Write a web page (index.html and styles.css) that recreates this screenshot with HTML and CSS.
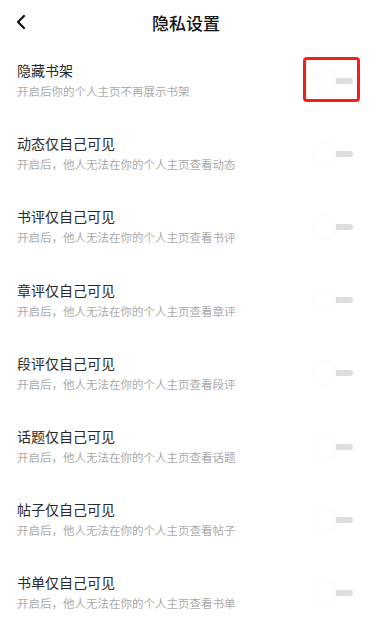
FILE: index.html
```html
<!DOCTYPE html>
<html lang="zh">
<head>
<meta charset="utf-8">
<link rel="stylesheet" href="styles.css">
</head>
<body>
<div class="page">
  <header class="header">
    <span class="back">
      <svg width="12" height="16" viewBox="0 0 12 16"><path d="M9 2 L3 8 L9 14" fill="none" stroke="#111" stroke-width="2.2" stroke-linecap="round" stroke-linejoin="round"/></svg>
    </span>
    <h1 class="title">隐私设置</h1>
    <span></span>
  </header>
  <ul class="list">
    <li class="row">
      <div class="text"><div class="name">隐藏书架</div><div class="desc">开启后你的个人主页不再展示书架</div></div>
      <div class="switch"><span class="knob"></span><span class="mark"></span></div>
    </li>
    <li class="row">
      <div class="text"><div class="name">动态仅自己可见</div><div class="desc">开启后，他人无法在你的个人主页查看动态</div></div>
      <div class="switch"><span class="knob"></span></div>
    </li>
    <li class="row">
      <div class="text"><div class="name">书评仅自己可见</div><div class="desc">开启后，他人无法在你的个人主页查看书评</div></div>
      <div class="switch"><span class="knob"></span></div>
    </li>
    <li class="row">
      <div class="text"><div class="name">章评仅自己可见</div><div class="desc">开启后，他人无法在你的个人主页查看章评</div></div>
      <div class="switch"><span class="knob"></span></div>
    </li>
    <li class="row">
      <div class="text"><div class="name">段评仅自己可见</div><div class="desc">开启后，他人无法在你的个人主页查看段评</div></div>
      <div class="switch"><span class="knob"></span></div>
    </li>
    <li class="row">
      <div class="text"><div class="name">话题仅自己可见</div><div class="desc">开启后，他人无法在你的个人主页查看话题</div></div>
      <div class="switch"><span class="knob"></span></div>
    </li>
    <li class="row">
      <div class="text"><div class="name">帖子仅自己可见</div><div class="desc">开启后，他人无法在你的个人主页查看帖子</div></div>
      <div class="switch"><span class="knob"></span></div>
    </li>
    <li class="row">
      <div class="text"><div class="name">书单仅自己可见</div><div class="desc">开启后，他人无法在你的个人主页查看书单</div></div>
      <div class="switch"><span class="knob"></span></div>
    </li>
  </ul>
</div>
</body>
</html>
```
FILE: styles.css
```css
* { box-sizing: border-box; }
html, body { margin: 0; padding: 0; background: #fff; }
body {
  font-family: "Noto Sans CJK SC", "Noto Sans", sans-serif;
  width: 372px;
  height: 625px;
  overflow: hidden;
}
.page { width: 372px; }
.header {
  height: 43px;
  display: grid;
  grid-template-columns: 60px 1fr 60px;
  align-items: center;
  padding-top: 2px;
}
.back {
  display: flex;
  align-items: center;
  padding-left: 15px;
  height: 20px;
  margin-top: -2px;
}
.title {
  margin: 0;
  text-align: center;
  font-size: 17px;
  font-weight: 500;
  color: #111;
  line-height: 24px;
}
.list { list-style: none; margin: 0; padding: 0; }
.row {
  height: 73.2px;
  display: flex;
  align-items: center;
  justify-content: space-between;
  padding: 0 19px 0 17px;
}
.text { display: flex; flex-direction: column; gap: 3px; }
.name { font-size: 14px; line-height: 20px; color: #2a2a2a; }
.desc { font-size: 11.5px; line-height: 16px; color: #aaa; }
.switch {
  position: relative;
  width: 39px;
  height: 22px;
  margin-top: 2px;
}
.switch::before {
  content: "";
  position: absolute;
  right: 0;
  top: 8px;
  width: 24px;
  height: 6px;
  border-radius: 3px;
  background: #dedede;
}
.knob {
  position: absolute;
  left: 0;
  top: 0;
  width: 22px;
  height: 22px;
  border-radius: 50%;
  background: #fff;
  box-shadow: 0 0 3px rgba(0,0,0,0.06);
}
.mark {
  position: absolute;
  left: -11px;
  top: -13px;
  width: 57px;
  height: 45px;
  border: 3px solid #f41e1e;
  border-radius: 4px;
}
```
